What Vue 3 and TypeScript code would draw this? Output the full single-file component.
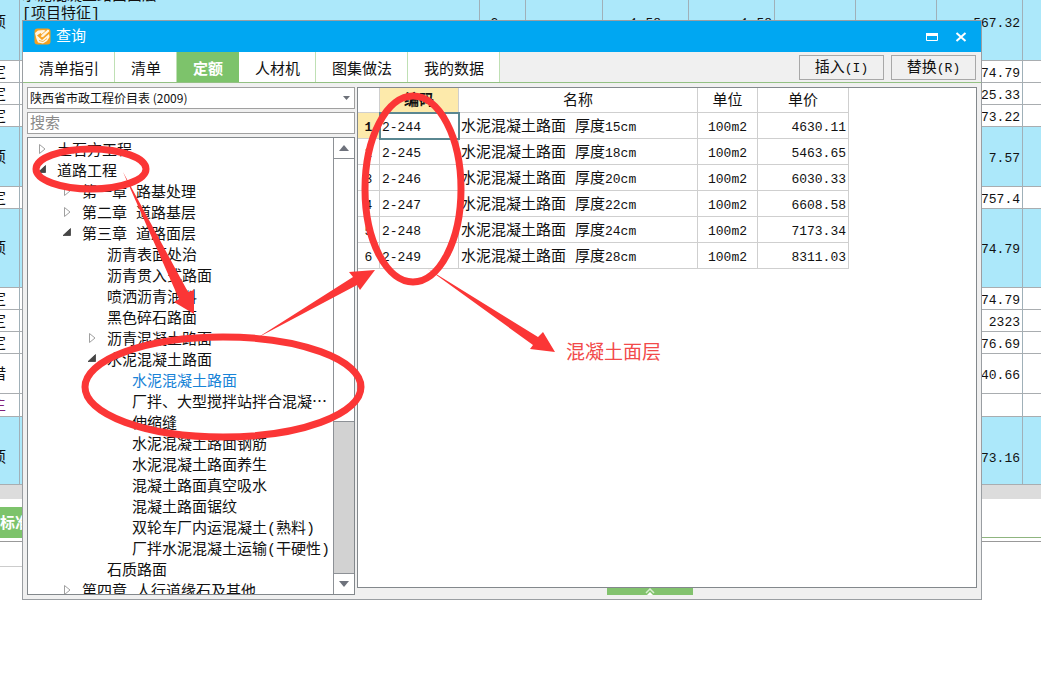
<script setup lang="ts">
import { ref } from 'vue'

interface SheetRow {
  kind: string
  height: string
  total: string
  tone?: string
}

interface TreeNode {
  label: string
  depth: number
  state?: 'open' | 'closed'
}

const sheetRows: SheetRow[] = [
  { kind: '定', height: 'h22', total: '74.79' },
  { kind: '定', height: 'h22', total: '25.33' },
  { kind: '定', height: 'h22', total: '73.22' },
  { kind: '项', height: 'h60', total: '7.57', tone: 'group' },
  { kind: '定', height: 'h22', total: '757.4' },
  { kind: '项', height: 'h79', total: '74.79', tone: 'group' },
  { kind: '定', height: 'h22', total: '74.79' },
  { kind: '定', height: 'h22', total: '2323' },
  { kind: '定', height: 'h22', total: '76.69' },
  { kind: '借', height: 'h40', total: '40.66' },
  { kind: '主', height: 'h23', total: '', tone: 'main' },
  { kind: '项', height: 'h68', total: '73.16', tone: 'group low' },
]

const tabs = ['清单指引', '清单', '定额', '人材机', '图集做法', '我的数据']
const activeTab = ref('定额')

const tree: TreeNode[] = [
  { label: '土石方工程', depth: 0, state: 'closed' },
  { label: '道路工程', depth: 0, state: 'open' },
  { label: '第一章 路基处理', depth: 1, state: 'closed' },
  { label: '第二章 道路基层', depth: 1, state: 'closed' },
  { label: '第三章 道路面层', depth: 1, state: 'open' },
  { label: '沥青表面处治', depth: 2 },
  { label: '沥青贯入式路面', depth: 2 },
  { label: '喷洒沥青油料', depth: 2 },
  { label: '黑色碎石路面', depth: 2 },
  { label: '沥青混凝土路面', depth: 2, state: 'closed' },
  { label: '水泥混凝土路面', depth: 2, state: 'open' },
  { label: '水泥混凝土路面', depth: 3 },
  { label: '厂拌、大型搅拌站拌合混凝⋯', depth: 3 },
  { label: '伸缩缝', depth: 3 },
  { label: '水泥混凝土路面钢筋', depth: 3 },
  { label: '水泥混凝土路面养生', depth: 3 },
  { label: '混凝土路面真空吸水', depth: 3 },
  { label: '混凝土路面锯纹', depth: 3 },
  { label: '双轮车厂内运混凝土(熟料)', depth: 3 },
  { label: '厂拌水泥混凝土运输(干硬性)', depth: 3 },
  { label: '石质路面', depth: 2 },
  { label: '第四章 人行道缘石及其他', depth: 1, state: 'closed' },
]
const selectedNode = ref(11)

const items = [
  { code: '2-244', size: '15cm', price: '4630.11' },
  { code: '2-245', size: '18cm', price: '5463.65' },
  { code: '2-246', size: '20cm', price: '6030.33' },
  { code: '2-247', size: '22cm', price: '6608.58' },
  { code: '2-248', size: '24cm', price: '7173.34' },
  { code: '2-249', size: '28cm', price: '8311.03' },
]
const selectedItem = ref(0)
const keyword = ref('')
</script>

<template>
  <main class="screen">
    <section class="sheet">
      <div class="row group lead">
        <div class="kind">项</div>
        <div class="desc">
          <p>水泥混凝土路面面层</p>
          <p>[项目特征]</p>
        </div>
        <div class="c-unit num">2</div>
        <div class="c-a"></div>
        <div class="c-b num">1.58</div>
        <div class="c-b num end">1.58</div>
        <div class="c-c"></div>
        <div class="c-c"></div>
        <div class="c-b num end">567.32</div>
        <div class="tail"></div>
      </div>
      <div v-for="(row, i) in sheetRows" :key="i" class="row" :class="[row.height, row.tone]">
        <div class="kind">{{ row.kind }}</div>
        <div class="wide num end">{{ row.total }}</div>
        <div class="tail"></div>
      </div>
      <div class="scroll-strip"></div>
      <div class="sheet-tabs"><button type="button">标准换算</button></div>
      <div class="sheet-foot"></div>
    </section>

    <section class="dialog" role="dialog" aria-labelledby="dialog-title">
      <header class="titlebar">
        <svg class="app-icon" viewBox="0 0 17 17" aria-hidden="true">
          <rect x="0.5" y="0.5" width="16" height="16" rx="3" fill="#f6a01e" />
          <path d="M1 5 L4 2.500 L10 2 L12 3 L8 6.500 L6.500 5 L3 7.500 L8 12 L15 6 L15.500 9 L13 13 L9 15.500 L4 14.500 L2.500 11 Z" fill="#fff6e2" />
          <path d="M7 7 L14 1 L16 3 L9 9.500 L6.500 9.500 Z" fill="#fff6e2" stroke="#f6a01e" stroke-width="0.8" />
          <path d="M5 12.500 L9 13.500 L13 10.500" fill="none" stroke="#f7b64c" stroke-width="1" />
        </svg>
        <h1 id="dialog-title">查询</h1>
        <button type="button" class="win-btn" aria-label="最大化">
          <svg viewBox="0 0 12 12"><path d="M0.5 2.5 H11.5 V9.5 H0.5 Z" fill="none" stroke="#fff" /><path d="M0 2 H12 V5 H0 Z" fill="#fff" /></svg>
        </button>
        <button type="button" class="win-btn" aria-label="关闭">
          <svg viewBox="0 0 12 12"><path d="M1.5 2 L10.5 10 M10.5 2 L1.5 10" stroke="#fff" stroke-width="2" /></svg>
        </button>
      </header>

      <nav class="toolbar">
        <button
          v-for="tab in tabs"
          :key="tab"
          type="button"
          class="tab"
          :class="{ active: tab === activeTab }"
          @click="activeTab = tab"
        >{{ tab }}</button>
        <div class="actions">
          <button type="button">插入<span class="num">(I)</span></button>
          <button type="button">替换<span class="num">(R)</span></button>
        </div>
      </nav>

      <div class="body">
        <div class="left">
          <div class="select-box">
            <select aria-label="价目表"><option>陕西省市政工程价目表 (2009)</option></select>
            <svg viewBox="0 0 7 4" aria-hidden="true"><path d="M0 0 H7 L3.5 4 Z" fill="#6c7078" /></svg>
          </div>
          <input v-model="keyword" type="text" class="search" placeholder="搜索" aria-label="搜索" />
          <div class="tree-box">
            <ul class="tree" role="tree">
              <li v-for="(node, i) in tree" :key="i" role="treeitem" :class="'d' + node.depth">
                <span class="marker">
                  <svg v-if="node.state === 'closed'" viewBox="0 0 10 12"><path d="M2.5 1.5 L8 6 L2.5 10.5 Z" fill="#fff" stroke="#a0a0a0" /></svg>
                  <svg v-else-if="node.state === 'open'" viewBox="0 0 10 12"><path d="M8.5 1.5 V8.5 H1 Z" fill="#454545" stroke="#222" stroke-width="0.6" /></svg>
                </span>
                <button type="button" :class="{ chosen: i === selectedNode }" @click="selectedNode = i">{{ node.label }}</button>
              </li>
            </ul>
            <div class="scrollbar">
              <button type="button" aria-label="向上滚动"><svg viewBox="0 0 10 6"><path d="M0 6 H10 L5 0 Z" fill="#6e727c" /></svg></button>
              <div class="thumb"></div>
              <div class="track"></div>
              <button type="button" aria-label="向下滚动"><svg viewBox="0 0 10 6"><path d="M0 0 H10 L5 6 Z" fill="#6e727c" /></svg></button>
            </div>
          </div>
        </div>

        <div class="right">
          <div class="table-box">
            <table>
              <colgroup>
                <col class="w-no" /><col class="w-code" /><col class="w-name" /><col class="w-unit" /><col class="w-price" />
              </colgroup>
              <thead>
                <tr><th></th><th class="hot">编码</th><th>名称</th><th>单位</th><th>单价</th></tr>
              </thead>
              <tbody>
                <tr v-for="(item, i) in items" :key="item.code" :class="{ current: i === selectedItem }" @click="selectedItem = i">
                  <th scope="row" class="num">{{ i + 1 }}</th>
                  <td class="num code">{{ item.code }}</td>
                  <td>水泥混凝土路面 厚度<span class="num">{{ item.size }}</span></td>
                  <td class="num mid">100m2</td>
                  <td class="num price">{{ item.price }}</td>
                </tr>
              </tbody>
            </table>
          </div>
          <button type="button" class="handle" aria-label="展开">
            <svg viewBox="0 0 10 7"><path d="M1 5 L5 1 L9 5" fill="none" stroke="#d8efd0" stroke-width="1.5" /><path d="M2 7 L5 4 L8 7 Z" fill="#fff" /></svg>
          </button>
        </div>
      </div>
    </section>

    <svg class="notes" width="1041" height="683" viewBox="0 0 1041 683">
      <g fill="none" stroke="#fb3636" stroke-width="7">
        <ellipse cx="91" cy="169" rx="55" ry="20" />
        <ellipse cx="413" cy="189" rx="48" ry="93" />
        <ellipse cx="223" cy="387" rx="138" ry="50" />
      </g>
      <g fill="#fb3636">
        <path d="M123 172 L188 292 L194 290 L194 314 L174 302 L179 299 Z" />
        <path d="M257 338 L353 277 L349 272 L375 270 L360 290 L357 285 Z" />
        <path d="M428 269 L538 337 L543 332 L555 352 L530 349 L533 345 Z" />
      </g>
      <text x="566" y="359">混凝土面层</text>
    </svg>
  </main>
</template>

<style>
body {
  margin: 0;
  background: #fff;
}
</style>

<style scoped>
.screen {
  position: relative;
  min-height: 683px;
  overflow: hidden;
  font: 15px/20px "Liberation Mono", "Noto Sans CJK SC", monospace;
  color: #111;
}
.screen * {
  box-sizing: border-box;
}
button,
input,
select {
  font: inherit;
  color: inherit;
  margin: 0;
  padding: 0;
  border: 0;
  border-radius: 0;
  background: none;
}
.num {
  font-family: "Liberation Mono", monospace;
  font-size: 13px;
}

/* Sheet behind the dialog */
.sheet {
  margin-top: -16px;
}
.row {
  display: flex;
  border-bottom: 1px solid #a9adb0;
  background: #fff;
}
.row > div {
  flex: none;
  display: flex;
  align-items: center;
  justify-content: center;
  padding-top: 4px;
  border-right: 1px solid #a0b0b8;
}
.row > .kind {
  width: 20px;
  justify-content: flex-end;
  padding-right: 13px;
}
.row > .end {
  justify-content: flex-end;
  padding-right: 2px;
}
.row > .desc {
  width: 460px;
  display: block;
  padding: 4px 0 0 2px;
}
.desc p {
  margin: 0;
  line-height: 18px;
}
.row > .c-unit { width: 46px; padding-right: 16px; }
.row > .c-a { width: 77px; }
.row > .c-b { width: 86px; }
.row > .c-c { width: 81px; }
.row > .wide { width: 1003px; }
.row > .tail {
  flex: 1;
  border-right: 0;
}
.group { background: #ace8fa; }
.main .kind { color: #80207a; }
.low > div { padding-top: 16px; }
.lead { height: 77px; }
.h22 { height: 22px; }
.h23 { height: 23px; }
.h40 { height: 40px; }
.h60 { height: 60px; }
.h68 { height: 68px; }
.h79 { height: 79px; }
.scroll-strip {
  height: 14px;
  background: #dcdcdc;
}
.sheet-tabs {
  padding-top: 8px;
  height: 39px;
  border-bottom: 1px solid #8fb57f;
}
.sheet-tabs button {
  height: 31px;
  padding-top: 4px;
  background: #7dc36b;
  color: #fff;
  font-weight: bold;
}
.sheet-foot {
  display: flex;
  height: 26px;
  margin-top: 3px;
  border-top: 1px solid #999;
}
.sheet-foot::after {
  content: "";
  width: 22px;
  border-bottom: 1px solid #ccc;
}

/* Dialog window */
.dialog {
  position: absolute;
  left: 22px;
  right: 59px;
  top: 20px;
  border: 1px solid #9a9ea2;
  background: #f0f0f0;
}
.titlebar {
  display: flex;
  align-items: center;
  height: 31px;
  padding: 0 14px 0 11px;
  background: #00a7f2;
  color: #fff;
}
.app-icon {
  width: 17px;
  height: 17px;
  margin-right: 5px;
}
h1 {
  flex: 1;
  margin: 0;
  padding-top: 3px;
  font-size: 15px;
  font-weight: normal;
}
.win-btn {
  display: flex;
  margin-left: 17px;
}
.win-btn svg {
  width: 12px;
  height: 12px;
}
.toolbar {
  display: flex;
  height: 31px;
  border-bottom: 1px solid #93c083;
}
.tab {
  padding: 7px 15px 0 16px;
  background: #fff;
  border-right: 1px solid #bfe0b4;
}
.tab.active {
  background: #7dc36b;
  border-color: #7dc36b;
  color: #fff;
  font-weight: bold;
}
.actions {
  display: flex;
  align-items: center;
  gap: 7px;
  margin-left: auto;
  padding-right: 5px;
}
.actions button {
  width: 85px;
  height: 25px;
  padding-top: 3px;
  border: 1px solid #a8a8a8;
}
.body {
  display: flex;
  gap: 2px;
  padding: 4px;
}
.left {
  flex: none;
  width: 328px;
  display: flex;
  flex-direction: column;
  gap: 3px;
}
.select-box {
  display: flex;
  align-items: center;
  height: 22px;
  border: 1px solid #a0a0a0;
  background: #fff;
}
.select-box select {
  flex: 1;
  appearance: none;
  height: 20px;
  padding-left: 2px;
  font-family: "Noto Sans CJK SC", sans-serif;
  font-size: 12px;
}
.select-box svg {
  width: 7px;
  height: 4px;
  margin-right: 4px;
}
.search {
  height: 22px;
  padding: 3px 0 0 2px;
  border: 1px solid #a0a0a0;
  background: #fff;
}
.search::placeholder {
  color: #8a8a8a;
  opacity: 1;
}
.tree-box {
  display: flex;
  height: 458px;
  border: 1px solid #83888c;
  background: #fff;
}
.tree {
  flex: 1;
  min-width: 0;
  margin: 0;
  padding: 1px 0 0;
  overflow: hidden;
  list-style: none;
}
.tree li {
  display: flex;
  align-items: center;
  height: 21px;
  white-space: nowrap;
}
.tree button {
  padding-top: 4px;
  line-height: 17px;
}
.tree .chosen {
  color: #1883d7;
}
.marker {
  display: flex;
  flex: none;
  width: 20px;
  height: 14px;
}
.marker svg {
  width: 10px;
  height: 12px;
}
.d0 { padding-left: 9px; }
.d1 { padding-left: 34px; }
.d2 { padding-left: 59px; }
.d3 { padding-left: 84px; }
.scrollbar {
  flex: none;
  display: flex;
  flex-direction: column;
  width: 21px;
  border-left: 1px solid #8d9196;
}
.scrollbar button {
  flex: none;
  display: flex;
  align-items: center;
  justify-content: center;
  height: 21px;
  border: 1px solid #8d9196;
  border-width: 0 0 1px;
}
.scrollbar button:last-child {
  border-width: 1px 0 0;
}
.scrollbar svg {
  width: 10px;
  height: 6px;
}
.thumb {
  flex: 263;
  border-bottom: 1px solid #8d9196;
}
.track {
  flex: 151;
  background: #d2d2d2;
}
.right {
  flex: 1;
  min-width: 0;
}
.table-box {
  height: 501px;
  border: 1px solid #83888c;
  background: #fff;
}
table {
  width: 491px;
  table-layout: fixed;
  border-collapse: separate;
  border-spacing: 0;
}
.w-no { width: 22px; }
.w-code { width: 79px; }
.w-name { width: 239px; }
.w-unit { width: 60px; }
.w-price { width: 91px; }
th,
td {
  height: 26px;
  padding: 4px 2px 0;
  border: 1px solid #cfcfcf;
  border-width: 0 1px 1px 0;
  font-weight: normal;
  text-align: left;
  white-space: nowrap;
  line-height: 20px;
}
th {
  text-align: center;
}
thead th {
  height: 25px;
}
.hot,
.current th {
  background: #fdeaab;
  font-weight: bold;
}
.current .code {
  outline: 2px solid #5a8791;
  outline-offset: -1px;
}
.mid {
  text-align: center;
}
.price {
  text-align: right;
}
.handle {
  display: flex;
  justify-content: center;
  width: 86px;
  height: 7px;
  margin-left: 250px;
  background: #82c26e;
}
.handle svg {
  width: 10px;
  height: 7px;
}

/* Hand-drawn marks over the window */
.notes {
  position: absolute;
  left: 0;
  top: 0;
  pointer-events: none;
}
.notes text {
  font-family: "Noto Sans CJK SC", sans-serif;
  font-size: 19px;
  fill: #f24a4a;
}
</style>
